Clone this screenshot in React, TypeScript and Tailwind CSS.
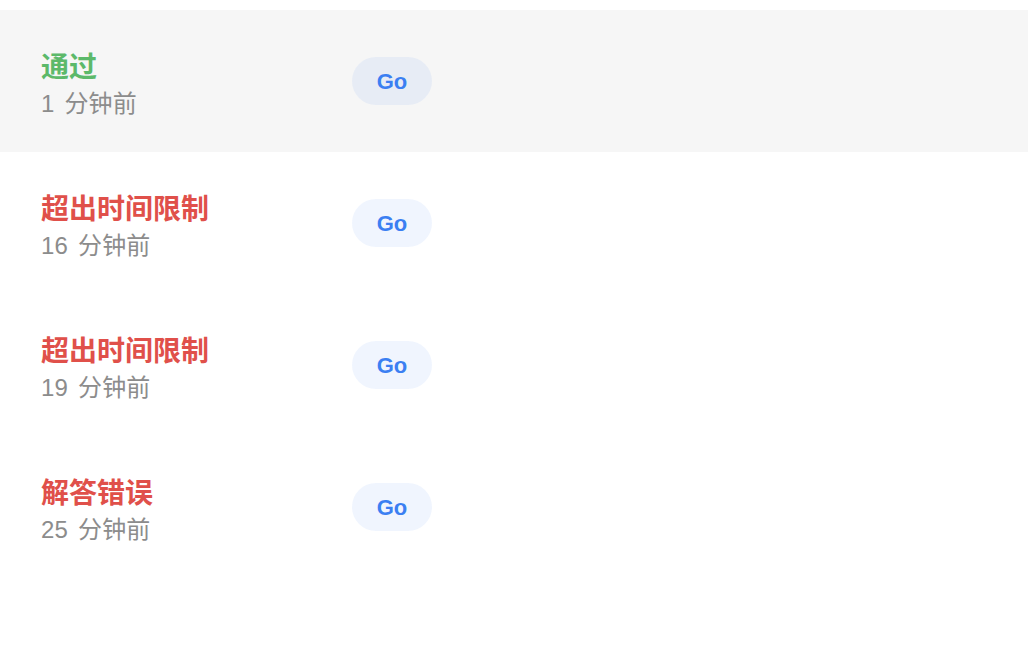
import React from "react";

type Submission = {
  id: number;
  status: string;
  passed: boolean;
  time: string;
};

const submissions: Submission[] = [
  { id: 1, status: "通过", passed: true, time: "1 分钟前" },
  { id: 2, status: "超出时间限制", passed: false, time: "16 分钟前" },
  { id: 3, status: "超出时间限制", passed: false, time: "19 分钟前" },
  { id: 4, status: "解答错误", passed: false, time: "25 分钟前" },
];

const App: React.FC = () => {
  return (
    <div
      className="min-h-[666px] w-full bg-white pt-[10px]"
      style={{ fontFamily: '"Liberation Sans", "Noto Sans CJK SC", sans-serif' }}
    >
      {submissions.map((s, i) => (
        <div
          key={s.id}
          className={`flex h-[142px] items-center pl-[41px] ${
            i === 0 ? "bg-[#f6f6f6]" : "bg-white"
          }`}
        >
          <div className="flex w-[311px] flex-col pt-[9px]">
            <span
              className={`text-[28px] font-semibold leading-[36px] ${
                s.passed ? "text-[#5cb96a]" : "text-[#e0504a]"
              }`}
            >
              {s.status}
            </span>
            <span className="text-[24px] leading-[36px] tracking-[0.2px] text-[#8c8c8c] [word-spacing:3px]">
              {s.time}
            </span>
          </div>
          <button className="flex h-[48px] w-[80px] items-center justify-center rounded-full bg-[#3b82f6]/[0.08] text-[22px] font-semibold text-[#3b7ff2]">
            Go
          </button>
        </div>
      ))}
    </div>
  );
};

export default App;
